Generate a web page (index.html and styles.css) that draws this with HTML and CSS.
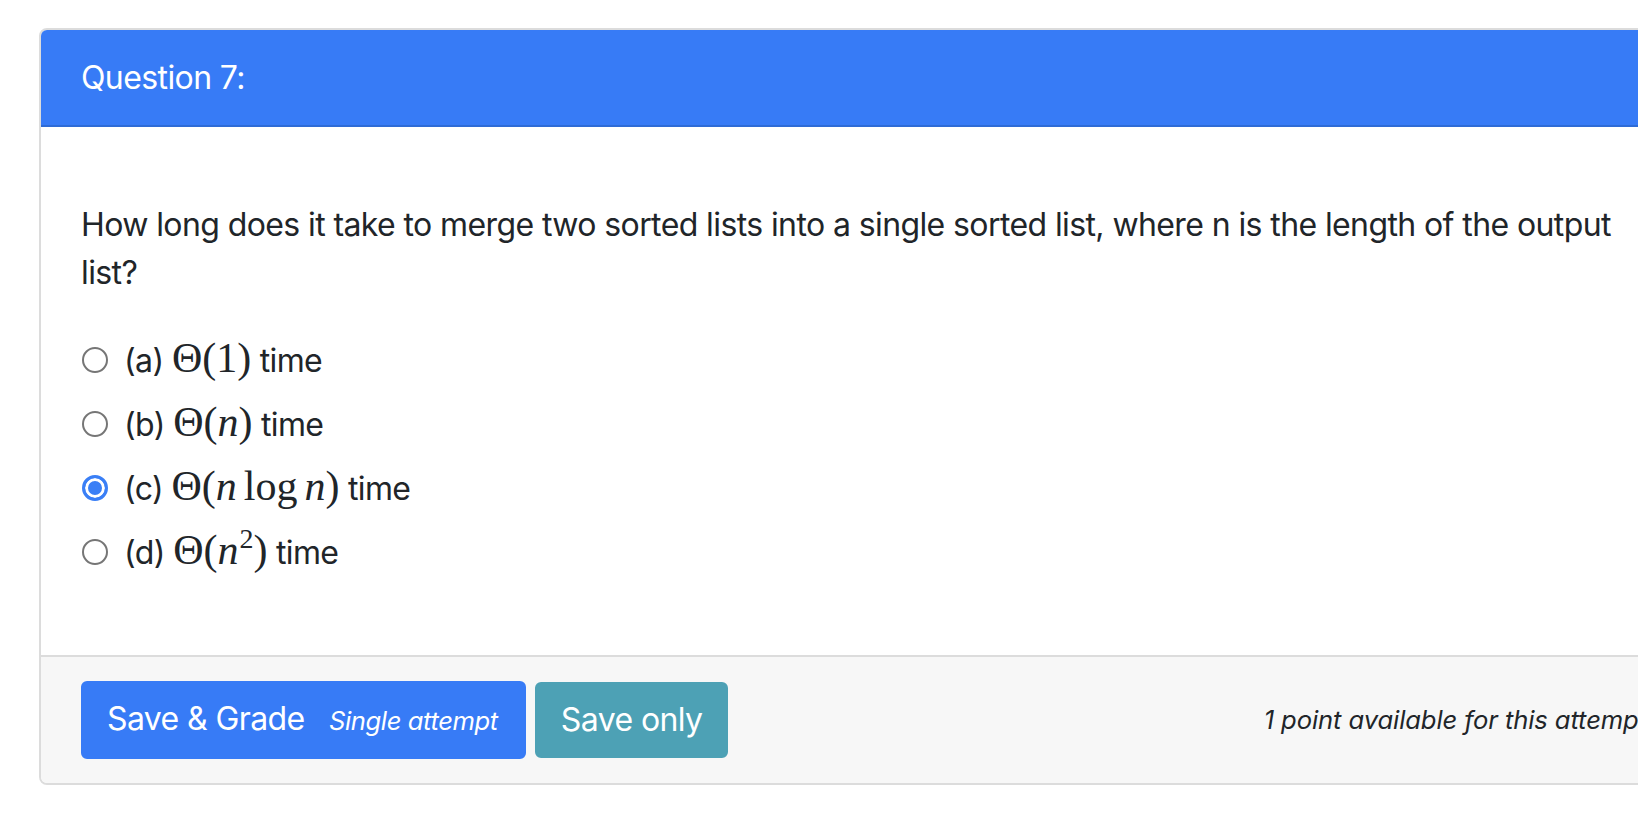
FILE: index.html
```html
<!DOCTYPE html>
<html>
<head>
<meta charset="utf-8">
<link rel="stylesheet" href="styles.css">
</head>
<body>
<div class="page">
  <div class="card">
    <div class="card-header">Question 7:</div>
    <div class="card-body">
      <p class="question">How long does it take to merge two sorted lists into a single sorted list, where n is the length of the output list?</p>
      <div class="options">
        <label class="option"><input type="radio" name="q"><span class="label">(a) <span class="math"><span class="up">Θ(1)</span></span> time</span></label>
        <label class="option"><input type="radio" name="q"><span class="label">(b) <span class="math"><span class="up">Θ(</span><span class="it">n</span><span class="up">)</span></span> time</span></label>
        <label class="option"><input type="radio" name="q" checked><span class="label">(c) <span class="math"><span class="up">Θ(</span><span class="it">n</span><span class="op">log</span><span class="it">n</span><span class="up">)</span></span> time</span></label>
        <label class="option"><input type="radio" name="q"><span class="label">(d) <span class="math"><span class="up">Θ(</span><span class="it">n</span><sup class="sup">2</sup><span class="up">)</span></span> time</span></label>
      </div>
    </div>
    <div class="card-footer">
      <button class="btn btn-primary">Save &amp; Grade <small class="btn-sub">Single attempt</small></button>
      <button class="btn btn-info">Save only</button>
      <small class="points">1 point available for this attempt</small>
    </div>
  </div>
</div>
</body>
</html>
```

FILE: styles.css
```css
html, body {
  margin: 0;
  padding: 0;
  overflow: hidden;
  background: #ffffff;
}
body {
  font-family: Inter, "Liberation Sans", Arial, sans-serif;
  font-size: 32px;
  line-height: 1.5;
  letter-spacing: -0.6px;
  color: #212529;
}
.page {
  padding: 28px 0 0 39px;
}
.card {
  width: 1646px;
  border: 2px solid #dcdcdc;
  border-radius: 8px;
  background: #ffffff;
  overflow: hidden;
}
.card-header {
  background: #377bf6;
  color: #ffffff;
  padding: 24px 40px 23px 40px;
  border-bottom: 2px solid #2e6bd6;
  line-height: 48px;
}
.card-body {
  padding: 40px 40px 40px 40px;
}
.question {
  margin: 34px 0 32px 0;
  line-height: 48px;
}
.options {
  margin-bottom: 30px;
}
.option {
  display: flex;
  align-items: center;
  height: 64px;
}
.option input {
  appearance: none;
  -webkit-appearance: none;
  box-sizing: border-box;
  width: 26px;
  height: 26px;
  margin: 0 16px 0 1px;
  border: 2px solid #767676;
  border-radius: 50%;
  background: #ffffff;
  position: relative;
  top: -1px;
  flex: none;
}
.option input:checked {
  border: 3px solid #3a7ff6;
  background: #3a7ff6;
  box-shadow: inset 0 0 0 3px #ffffff;
}
.label {
  white-space: nowrap;
}
.math {
  font-family: "Liberation Serif", "Times New Roman", serif;
  font-size: 42px;
  line-height: 1;
  letter-spacing: 0;
}
.it {
  font-style: italic;
}
.op {
  margin: 0 7px 0 7px;
}
.sup {
  font-size: 28px;
  vertical-align: 0;
  position: relative;
  top: -16px;
  margin-left: 1px;
}
.card-footer {
  display: flex;
  align-items: center;
  background: #f7f7f7;
  border-top: 2px solid #dcdcdc;
  padding: 24px 40px 24px 40px;
}
.btn {
  font-family: inherit;
  font-size: 32px;
  line-height: 48px;
  letter-spacing: -0.6px;
  color: #ffffff;
  border: 2px solid transparent;
  border-radius: 6px;
  padding: 12px 24px;
  margin: 0;
  cursor: pointer;
}
.btn-primary {
  background: #377bf6;
  border-color: #377bf6;
  padding-right: 26px;
}
.btn-sub {
  font-size: 25.6px;
  font-style: italic;
  margin-left: 16px;
  letter-spacing: -0.4px;
}
.btn-info {
  background: #4da1b5;
  border-color: #4da1b5;
  margin-left: 9px;
}
.points {
  margin-left: auto;
  font-size: 25.6px;
  font-style: italic;
  letter-spacing: -0.1px;
  color: #212529;
}
```
